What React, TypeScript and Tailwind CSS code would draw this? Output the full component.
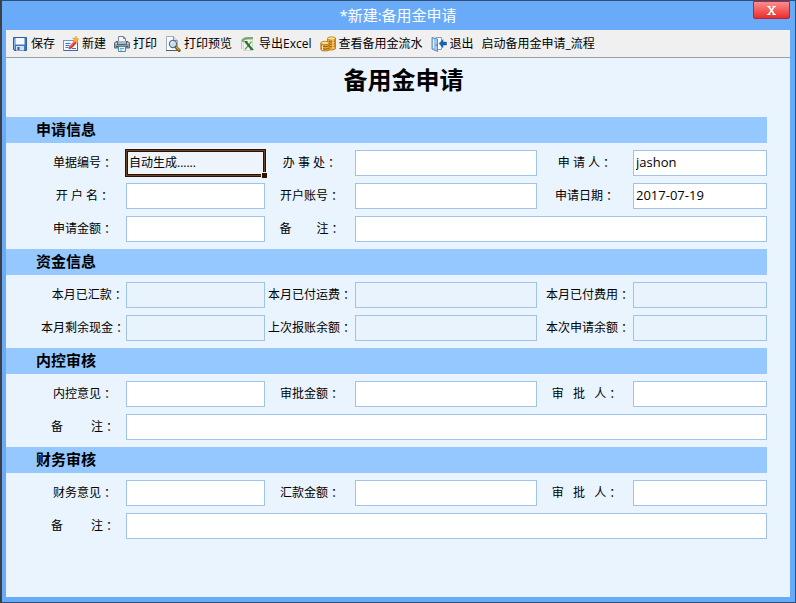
import React from 'react'

type Cell = {
  id: string
  label: string
  value?: string
  readOnly?: boolean
  active?: boolean
  wide?: 'rest' | 'full'
}

type Section = {
  title: string
  cells: Cell[]
}

const sections: Section[] = [
  {
    title: '申请信息',
    cells: [
      { id: 'billNo', label: '单据编号', value: '自动生成......', readOnly: true, active: true },
      { id: 'office', label: '办 事 处' },
      { id: 'applicant', label: '申 请 人', value: 'jashon' },
      { id: 'accountName', label: '开 户 名' },
      { id: 'accountNo', label: '开户账号' },
      { id: 'applyDate', label: '申请日期', value: '2017-07-19' },
      { id: 'applyAmount', label: '申请金额' },
      { id: 'applyRemark', label: '备        注', wide: 'rest' },
    ],
  },
  {
    title: '资金信息',
    cells: [
      { id: 'remitted', label: '   本月已汇款', readOnly: true },
      { id: 'freight', label: '本月已付运费', readOnly: true },
      { id: 'expense', label: '  本月已付费用', readOnly: true },
      { id: 'cashLeft', label: '本月剩余现金', readOnly: true },
      { id: 'lastBalance', label: '上次报账余额', readOnly: true },
      { id: 'applyBalance', label: '  本次申请余额', readOnly: true },
    ],
  },
  {
    title: '内控审核',
    cells: [
      { id: 'controlOpinion', label: '内控意见' },
      { id: 'approvedAmount', label: '审批金额' },
      { id: 'controlApprover', label: '审   批   人' },
      { id: 'controlRemark', label: '备         注', wide: 'full' },
    ],
  },
  {
    title: '财务审核',
    cells: [
      { id: 'financeOpinion', label: '财务意见' },
      { id: 'remitAmount', label: '汇款金额' },
      { id: 'financeApprover', label: '审   批   人' },
      { id: 'financeRemark', label: '备         注', wide: 'full' },
    ],
  },
]

const SaveIcon = () => (
  <svg className="size-4" viewBox="0 0 16 16" aria-hidden="true">
    <path d="M1.5 1.5h13v13h-12l-1-1z" fill="#3f78c9" stroke="#2a5ca8" />
    <path d="M3.5 2h9v6.5h-9z" fill="#f7fafd" />
    <path d="M4 10h8v4.5H4z" fill="#d5dfeb" />
    <path d="M5.5 11h2v3h-2z" fill="#34588c" />
    <path d="M2.5 2.5v10.5" stroke="#86b3ec" />
  </svg>
)

const NewIcon = () => (
  <svg className="size-4" viewBox="0 0 16 16" aria-hidden="true">
    <rect x="0.5" y="4.5" width="14" height="10" fill="#f4f8fd" stroke="#6e94cb" />
    <path d="M1 14.5h14M14.5 7v8" stroke="#3c69ad" />
    <path d="M2.5 7.5h5M2.5 9.5h4M2.5 11.5h3M9 12.5h4" stroke="#3f74c4" />
    <path d="M6 13l.5-2.5 5-5.5 2 2-5.2 5.2z" fill="#e0352b" stroke="#a92620" strokeWidth="0.5" />
    <path d="M6.8 10.8l4.8-5" stroke="#ff8a70" />
    <path d="M13 0l.7 2.3L16 3l-2 1.2.8 2.3-2.3-1.3L10.3 6l.9-2.2L9.5 2l2.4.2z" fill="#ffad2c" stroke="#ef8a1d" strokeWidth="0.4" />
  </svg>
)

const PrinterIcon = () => (
  <svg className="size-4" viewBox="0 0 16 16" aria-hidden="true">
    <path d="M4.5 6V.5h5l2 2V6z" fill="#f5f8fb" stroke="#74818f" />
    <path d="M9.5.5v2h2" fill="none" stroke="#74818f" />
    <path d="M2 5.5h12l1.5 1.5v5h-15V7z" fill="#91a0ac" stroke="#5c6a76" />
    <path d="M1.5 7.5h13" stroke="#d3dce3" />
    <path d="M3.5 5v3.5h9V5" fill="#a9b8c3" stroke="#55636f" />
    <path d="M2 10.5h12" stroke="#42505c" />
    <path d="M4.5 10.5h7v5h-7z" fill="#e3f3fc" stroke="#5684a1" />
    <path d="M6 12.5h4M6 14h2" stroke="#6caed0" />
  </svg>
)

const PreviewIcon = () => (
  <svg className="size-4" viewBox="0 0 16 16" aria-hidden="true">
    <path d="M1.5.5h7l4 4v10h-11z" fill="#fbfcfe" stroke="#a3acb8" />
    <path d="M8.5.5v4h4" fill="#dbe4ee" stroke="#8994a3" />
    <path d="M1 14.5h12" stroke="#4c5968" />
    <circle cx="8" cy="8" r="3.6" fill="#c3e1f5" stroke="#5c7188" strokeWidth="1.2" />
    <path d="M6 7.5c.3-1 1-1.6 2-1.7" stroke="#fff" fill="none" />
    <path d="M11 11.2l3.2 3.2" stroke="#765115" strokeWidth="3" strokeLinecap="round" />
    <path d="M11.4 11.3l2.6 2.6" stroke="#dca42d" strokeWidth="1.3" strokeLinecap="round" />
  </svg>
)

const ExcelIcon = () => (
  <svg className="size-4" viewBox="0 0 16 16" aria-hidden="true">
    <path d="M3.5 3.5h9v11h-9z" fill="#f3f8ef" stroke="#cddcc4" />
    <path d="M1 5.5C1.5 2.500 4 1 7.500 1H13v2.200H8.500C5.500 3.200 4.200 4 3.500 6z" fill="#7fa874" />
    <path d="M1.500 4.500V13" stroke="#b4cca9" />
    <path d="M11.500 5.500L5 13.500" stroke="#6fa46e" strokeWidth="1.400" />
    <path d="M5.500 5.500l6.500 8" stroke="#2f6b38" strokeWidth="2.200" />
    <path d="M4.500 5.500h3M10.500 13.500h3" stroke="#2f6b38" />
  </svg>
)

const CoinsIcon = () => (
  <svg className="size-4" viewBox="0 0 16 16" aria-hidden="true">
    <g fill="#eda936" stroke="#a8640f" strokeWidth="0.7">
      <path d="M7.500 3v10c0 2 8 1 8-.5V2z" />
      <ellipse cx="11.500" cy="2.500" rx="4" ry="1.700" fill="#ffe08a" />
      <path d="M.8 7v6.500c0 2 8.500 2 8.500 0V7z" />
      <ellipse cx="5" cy="7" rx="4.200" ry="1.700" fill="#ffe08a" />
    </g>
    <path d="M9 5.500c2 .8 4.500.4 6-.5M9.500 8c2 .6 4.500.3 5.500-.5M10 10.500c2 .4 4 .1 5-.5M1.200 9.700c2 1.200 6 1.200 7.700 0M1.200 12.200c2 1.200 6 1.200 7.700 0" stroke="#9c5609" fill="none" />
    <path d="M2.500 9.500v4.500M13 3.500v9" stroke="#ffe9a6" />
  </svg>
)

const ExitIcon = () => (
  <svg className="size-4" viewBox="0 0 16 16" aria-hidden="true">
    <path d="M5 1.500h5.500v12H5z" fill="#fff" stroke="#8f9dab" />
    <path d="M1 1.500L6.500 3v12.500L1 13z" fill="#9fc6ee" stroke="#5685b8" strokeWidth="0.9" />
    <path d="M2.500 3.500v8.500" stroke="#dff0ff" />
    <circle cx="5.200" cy="9" r="0.700" fill="#375f8e" />
    <path d="M8 7.500l4-4v2.600h3.500v3H12v2.600z" fill="#1264b5" stroke="#0b4a90" strokeWidth="0.400" />
  </svg>
)

const tools = [
  { name: '保存', icon: SaveIcon },
  { name: '新建', icon: NewIcon },
  { name: '打印', icon: PrinterIcon },
  { name: '打印预览', icon: PreviewIcon },
  { name: '导出Excel', icon: ExcelIcon },
  { name: '查看备用金流水', icon: CoinsIcon },
  { name: '退出', icon: ExitIcon },
  { name: '启动备用金申请_流程' },
]

const Field = ({ cell }: { cell: Cell }) => {
  const span = cell.wide === 'full' ? 'col-span-5' : cell.wide === 'rest' ? 'col-span-3' : ''
  const look = cell.active
    ? 'bg-[#edf4fc] text-xs border-[#6b4526] outline-1 outline-[#2c1205] inset-ring-1 inset-ring-[#2c1205]'
    : cell.readOnly
      ? 'bg-[#e9f3fe] border-[#a0c3ea] text-[13px]'
      : 'bg-white border-[#a0c3ea] text-[13px]'

  return (
    <>
      <label htmlFor={cell.id} className="flex items-center justify-center whitespace-pre nth-[6n+1]:pl-[34px]">
        {cell.label}
        <span className="font-['Noto_Sans_CJK_TC',sans-serif]">：</span>
      </label>
      <div className={`relative flex ${span}`}>
        <input
          id={cell.id}
          defaultValue={cell.value}
          readOnly={cell.readOnly}
          className={`h-[26px] w-full min-w-0 border px-0.5 pb-0.5 ${look}`}
        />
        {cell.active && (
          <span className="absolute -right-0.5 -bottom-0.5 size-[6px] border-t border-l border-[#e9f3fe] bg-[#2c1205]" />
        )}
      </div>
    </>
  )
}

const App = () => {
  return (
    <div className="flex min-h-screen flex-col border border-l-2 border-[#2f4f74] border-l-[#3c3f46] bg-[#6aabf9] pr-[5px] pb-[5px] pl-1 font-['Open_Sans','Noto_Sans_CJK_SC',sans-serif] text-xs text-black">
      <header className="relative flex h-[29px] items-center justify-center pb-0.5">
        <h1 className="text-[15px] text-white">*新建:备用金申请</h1>
        <button
          type="button"
          aria-label="关闭"
          className="absolute top-0 right-0 flex h-[18px] w-[37px] items-center justify-center rounded-b-xs border border-[#b3253a] bg-linear-to-b from-[#f98d8d] via-[#f45c5c] to-[#ea2a2a]"
        >
          <svg className="h-[9px] w-[9px]" viewBox="0 0 9 9" aria-hidden="true">
            <path d="M0 0h3.500v1H3l1.500 2L6 1h-.5V0H9v1H8L5.500 4.300 8 8h1v1H5.300V8H6L4.400 5.700 2.900 8h.6v1H0V8h1l2.500-3.600L1 1H0z" fill="#fff" />
          </svg>
        </button>
      </header>

      <nav className="flex h-7 items-center gap-2 border-b border-[#9aa0a3] bg-[#f0f0f0] pl-1.5">
        {tools.map(({ name, icon: Icon }) => (
          <button key={name} type="button" className="flex items-center gap-[3px] whitespace-nowrap">
            {Icon && <Icon />}
            {name}
          </button>
        ))}
      </nav>

      <main className="flex-1 bg-[#e9f4fe] pr-[23px] pb-10">
        <h2 className="pt-0.5 pb-[17px] pl-[34px] text-center text-2xl leading-10 font-bold">备用金申请</h2>
        <form className="flex flex-col gap-[7px]">
          {sections.map(section => (
            <section key={section.title} className="flex flex-col gap-[7px]">
              <h3 className="bg-[#94c8ff] pb-0.5 pl-[30px] text-[15px] leading-6 font-bold">{section.title}</h3>
              <div className="grid grid-cols-[120px_139fr_90px_182fr_96px_134fr] gap-y-[7px]">
                {section.cells.map(cell => (
                  <Field key={cell.id} cell={cell} />
                ))}
              </div>
            </section>
          ))}
        </form>
      </main>
    </div>
  )
}

export default App
